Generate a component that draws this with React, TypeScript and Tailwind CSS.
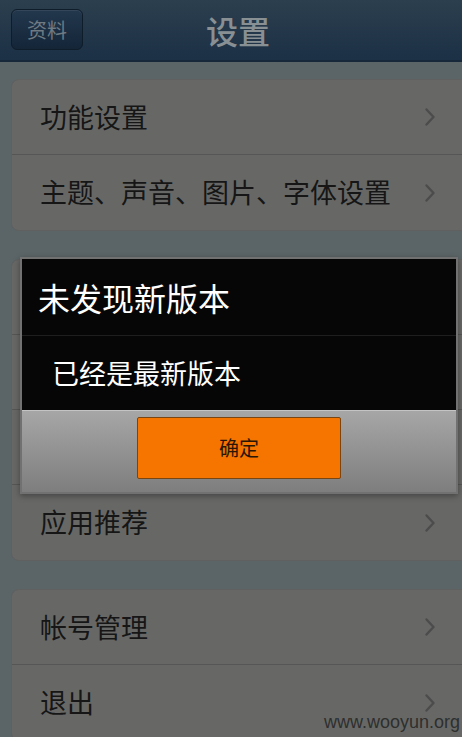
import React from 'react';

const font = { fontFamily: '"Noto Sans CJK SC", "Noto Sans", sans-serif' };

const Chevron: React.FC = () => (
  <svg width="12" height="20" viewBox="0 0 12 20" className="shrink-0">
    <path d="M2.5 2.5 L9.5 10 L2.5 17.5" fill="none" stroke="#4b4c4b" strokeWidth="2.4" strokeLinecap="round" strokeLinejoin="round" />
  </svg>
);

const Row: React.FC<{ label: string; last?: boolean }> = ({ label, last }) => (
  <div className={`flex h-[75px] items-center justify-between pl-[28px] pr-[33px] ${last ? '' : 'border-b border-[#555655]'}`}>
    <span className="text-[27px] text-[#161616]">{label}</span>
    <Chevron />
  </div>
);

const Group: React.FC<{ items: string[] }> = ({ items }) => (
  <div className="ml-[11px] -mr-[8px] rounded-[8px] border border-[#5f605f] bg-[#676866]">
    {items.map((label, i) => (
      <Row key={label} label={label} last={i === items.length - 1} />
    ))}
  </div>
);

export default function App() {
  return (
    <div style={font} className="relative h-[737px] w-[462px] overflow-hidden bg-[#5b6466]">
      <header className="relative flex h-[62px] items-center justify-center border-b-2 border-[#17283a] bg-gradient-to-b from-[#2c3f4e] to-[#1c3046] pl-[14px]">
        <button className="absolute left-[11px] top-[9px] flex h-[41px] w-[72px] items-center justify-center rounded-[6px] border border-[#0f1c2a] bg-gradient-to-b from-[#23384d] to-[#142538] text-[20px] text-[#6f7a82] shadow-[inset_0_1px_0_rgba(255,255,255,0.08)]">
          资料
        </button>
        <h1 className="text-[32px] font-medium text-[#889094]">设置</h1>
      </header>

      <div className="flex flex-col gap-[28px] pt-[17px]">
        <Group items={['功能设置', '主题、声音、图片、字体设置']} />
        <Group items={['消息提醒', '检查新版本', '关于我们', '应用推荐']} />
        <Group items={['帐号管理', '退出']} />
      </div>

      <div className="absolute left-[20px] top-[257px] w-[438px] border-2 border-[#707170] bg-[#060606] shadow-[0_2px_6px_rgba(0,0,0,0.35)]">
        <div className="flex h-[77px] items-center border-b border-[#1e1e1e] pl-[16px]">
          <span className="text-[32px] text-white">未发现新版本</span>
        </div>
        <div className="flex h-[74px] items-center pl-[30px]">
          <span className="text-[27px] text-white">已经是最新版本</span>
        </div>
        <div className="flex h-[82px] justify-center border-t border-[#c4c4c4] bg-gradient-to-b from-[#a6a6a6] to-[#7e7e7e] pt-[6px]">
          <button className="flex h-[62px] w-[204px] items-center justify-center rounded-[2px] border border-[#7a4510] bg-[#f67400] text-[20px] text-[#2a1605]">
            确定
          </button>
        </div>
      </div>

      <div className="absolute bottom-[1px] right-[2px] text-[18px] text-[#2e2f2e]" style={{ fontFamily: '"Liberation Sans", Arial, sans-serif' }}>
        www.wooyun.org
      </div>
    </div>
  );
}
